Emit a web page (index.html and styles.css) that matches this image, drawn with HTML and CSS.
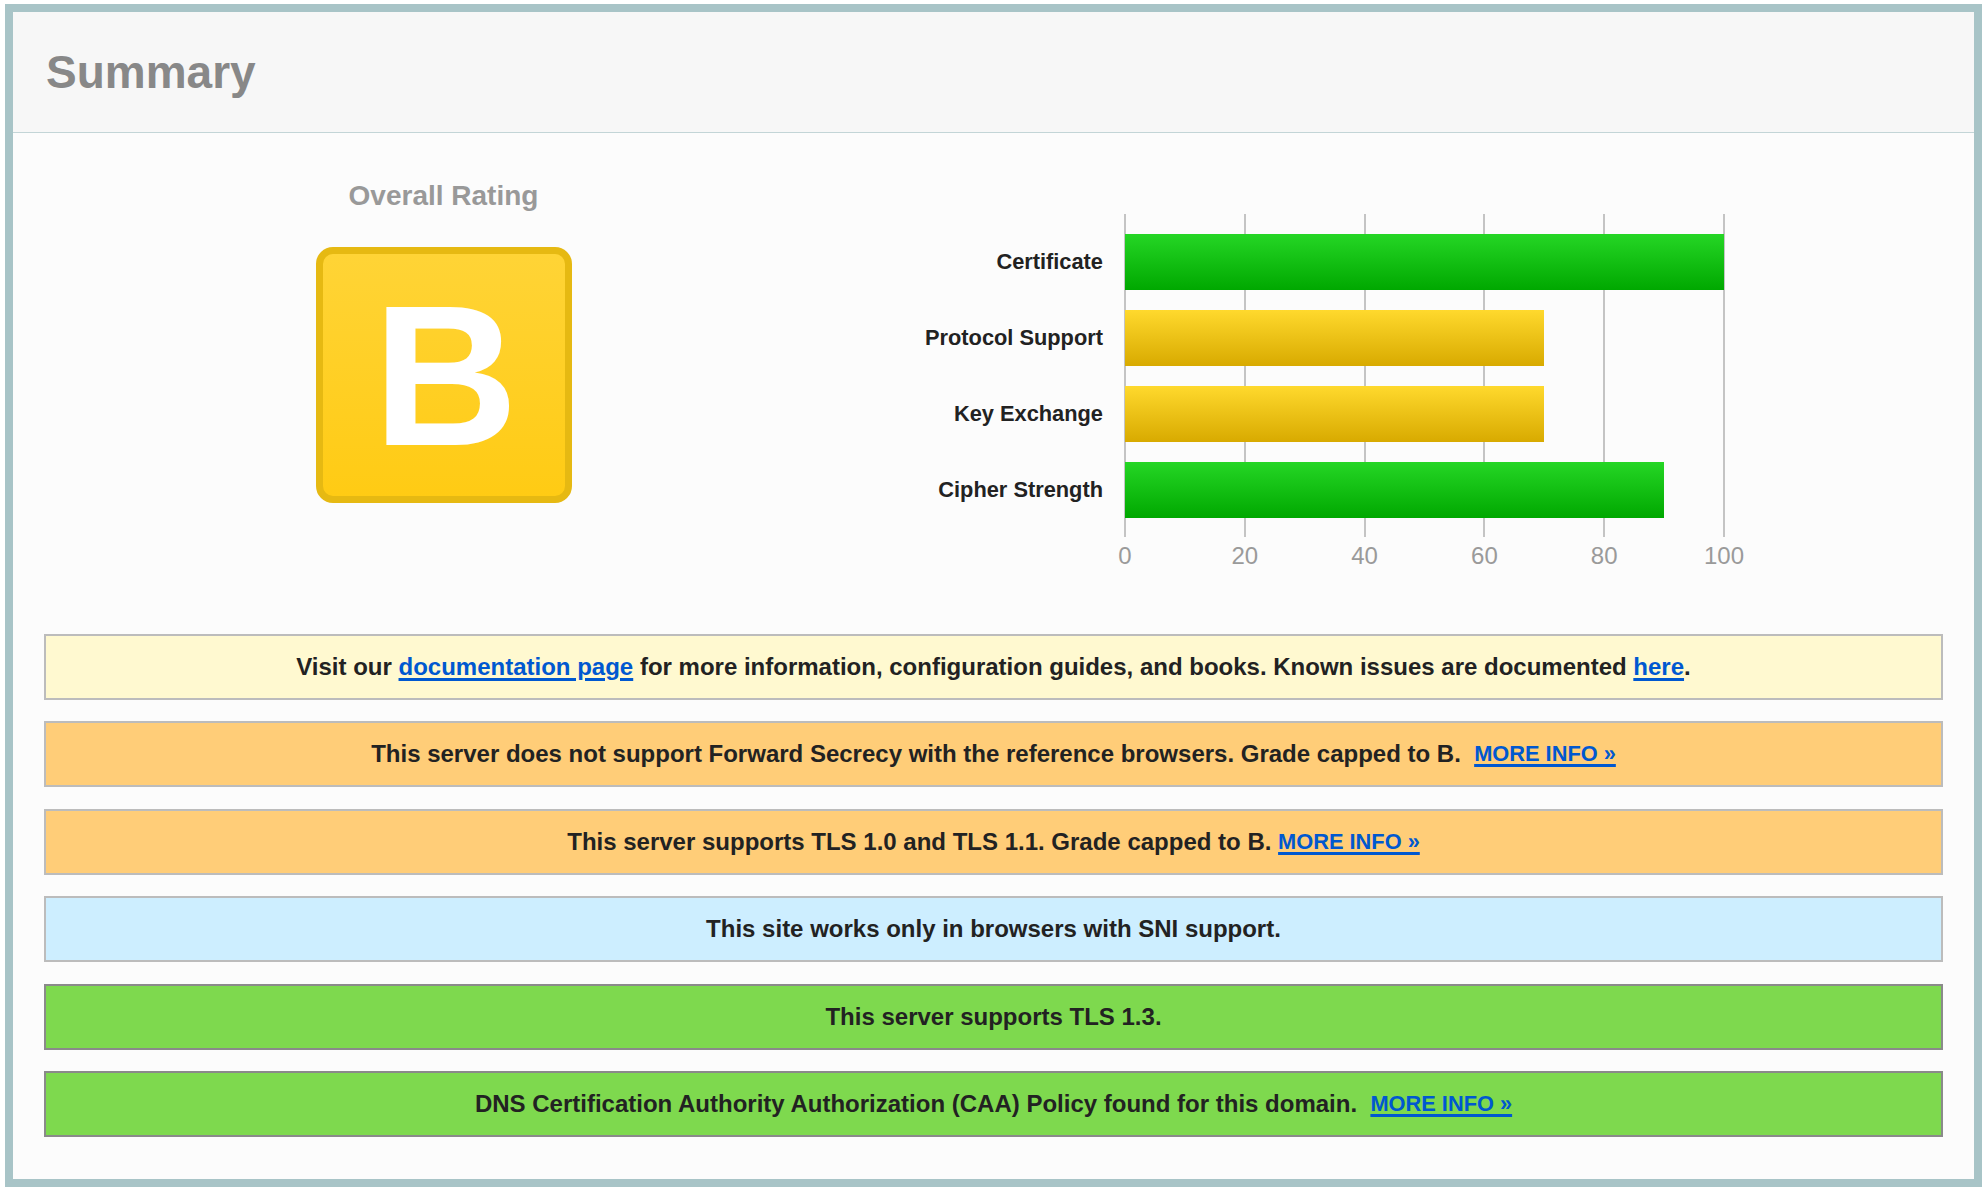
FILE: index.html
```html
<!DOCTYPE html>
<html lang="en">
<head>
<meta charset="utf-8">
<title>Summary</title>
<link rel="stylesheet" href="styles.css">
</head>
<body>
<div class="frame">
  <header class="head">
    <h1 class="head-title">Summary</h1>
  </header>
  <div class="content">
    <div class="rating-row">
      <div class="overall">
        <div class="overall-title">Overall Rating</div>
        <div class="grade">B</div>
      </div>
      <div class="chart">
        <div class="chart-labels">
          <div class="clabel">Certificate</div>
          <div class="clabel">Protocol Support</div>
          <div class="clabel">Key Exchange</div>
          <div class="clabel">Cipher Strength</div>
        </div>
        <div class="plot">
          <span class="gl" style="left:0%"></span>
          <span class="gl" style="left:20%"></span>
          <span class="gl" style="left:40%"></span>
          <span class="gl" style="left:60%"></span>
          <span class="gl" style="left:80%"></span>
          <span class="gl" style="left:100%"></span>
          <div class="bar bar-green" style="width:100%"></div>
          <div class="bar bar-yellow" style="width:70%"></div>
          <div class="bar bar-yellow" style="width:70%"></div>
          <div class="bar bar-green" style="width:90%"></div>
        </div>
        <div class="axis">
          <span class="tick" style="left:0%">0</span>
          <span class="tick" style="left:20%">20</span>
          <span class="tick" style="left:40%">40</span>
          <span class="tick" style="left:60%">60</span>
          <span class="tick" style="left:80%">80</span>
          <span class="tick" style="left:100%">100</span>
        </div>
      </div>
    </div>
    <div class="alerts">
      <div class="alert alert-info">Visit our <a href="#">documentation page</a> for more information, configuration guides, and books. Known issues are documented <a href="#">here</a>.</div>
      <div class="alert alert-warn">This server does not support Forward Secrecy with the reference browsers. Grade capped to B.&nbsp; <a href="#" class="more">MORE INFO »</a></div>
      <div class="alert alert-warn">This server supports TLS 1.0 and TLS 1.1. Grade capped to B. <a href="#" class="more">MORE INFO »</a></div>
      <div class="alert alert-blue">This site works only in browsers with SNI support.</div>
      <div class="alert alert-good">This server supports TLS 1.3.</div>
      <div class="alert alert-good">DNS Certification Authority Authorization (CAA) Policy found for this domain.&nbsp; <a href="#" class="more">MORE INFO »</a></div>
    </div>
  </div>
</div>
</body>
</html>
```
FILE: styles.css
```css
* { box-sizing: border-box; }

html, body {
  margin: 0;
  padding: 0;
  background: #ffffff;
}

body {
  padding: 4px 4px 5px 5px;
  font-family: "Liberation Sans", Arial, Helvetica, sans-serif;
  color: #222222;
}

.frame {
  height: 1183px;
  border: 8px solid #a8c4c7;
  background: #fcfcfc;
  display: flex;
  flex-direction: column;
}

.head {
  height: 121px;
  flex: none;
  background: #f7f7f7;
  border-bottom: 1px solid #c3d5d7;
  display: flex;
  align-items: center;
  padding-left: 33px;
}

.head-title {
  margin: 0;
  font-size: 46px;
  line-height: 1;
  font-weight: bold;
  color: #888888;
}

.content {
  flex: 1;
  padding: 47px 31px 0 31px;
}

.rating-row {
  display: flex;
  align-items: flex-start;
}

.overall {
  width: 799px;
  flex: none;
  display: flex;
  flex-direction: column;
  align-items: center;
}

.overall-title {
  font-size: 28px;
  line-height: 32px;
  font-weight: bold;
  color: #999999;
}

.grade {
  margin-top: 35px;
  width: 256px;
  height: 256px;
  border: 7px solid #e6b912;
  border-radius: 17px;
  background: linear-gradient(#ffd436, #ffcb14);
  color: #ffffff;
  font-size: 201px;
  font-weight: bold;
  line-height: 1;
  display: flex;
  align-items: center;
  justify-content: center;
  padding-left: 4px;
}

.chart {
  margin-left: 10px;
  margin-top: 34px;
  display: grid;
  grid-template-columns: 250px 599px;
  column-gap: 22px;
}

.chart-labels {
  padding: 20px 0 19px;
  display: flex;
  flex-direction: column;
  gap: 20px;
}

.clabel {
  height: 56px;
  display: flex;
  align-items: center;
  justify-content: flex-end;
  font-size: 21.8px;
  font-weight: bold;
  color: #222222;
}

.plot {
  position: relative;
  padding: 20px 0 19px;
  display: flex;
  flex-direction: column;
  gap: 20px;
}

.gl {
  position: absolute;
  top: 0;
  bottom: 0;
  width: 2px;
  margin-left: -1px;
  background: #c4c4c4;
}

.bar {
  position: relative;
  height: 56px;
}

.bar-green {
  background: linear-gradient(#25d625, #00a800);
}

.bar-yellow {
  background: linear-gradient(#ffd92d, #d8aa00);
}

.axis {
  grid-column: 2;
  position: relative;
  height: 24px;
  margin-top: 7px;
}

.tick {
  position: absolute;
  top: 0;
  transform: translateX(-50%);
  font-size: 24px;
  line-height: 24px;
  color: #9a9a9a;
}

.alerts {
  margin-top: 66px;
  display: flex;
  flex-direction: column;
  gap: 21.4px;
}

.alert {
  height: 66px;
  border: 2px solid #bcbcbc;
  display: flex;
  align-items: center;
  justify-content: center;
  font-size: 24px;
  line-height: 30px;
  font-weight: bold;
  color: #222222;
  white-space: pre-wrap;
}

.alert a {
  color: #0058d0;
  text-decoration: underline;
  text-decoration-thickness: 2.5px;
  text-underline-offset: 3px;
}

.alert a.more {
  font-size: 21.8px;
}

.alert-info { background: #fff9d0; }
.alert-warn { background: #ffcd78; }
.alert-blue { background: #cdeeff; }
.alert-good { background: #7ed94e; border-color: #8a8a8a; }
```
